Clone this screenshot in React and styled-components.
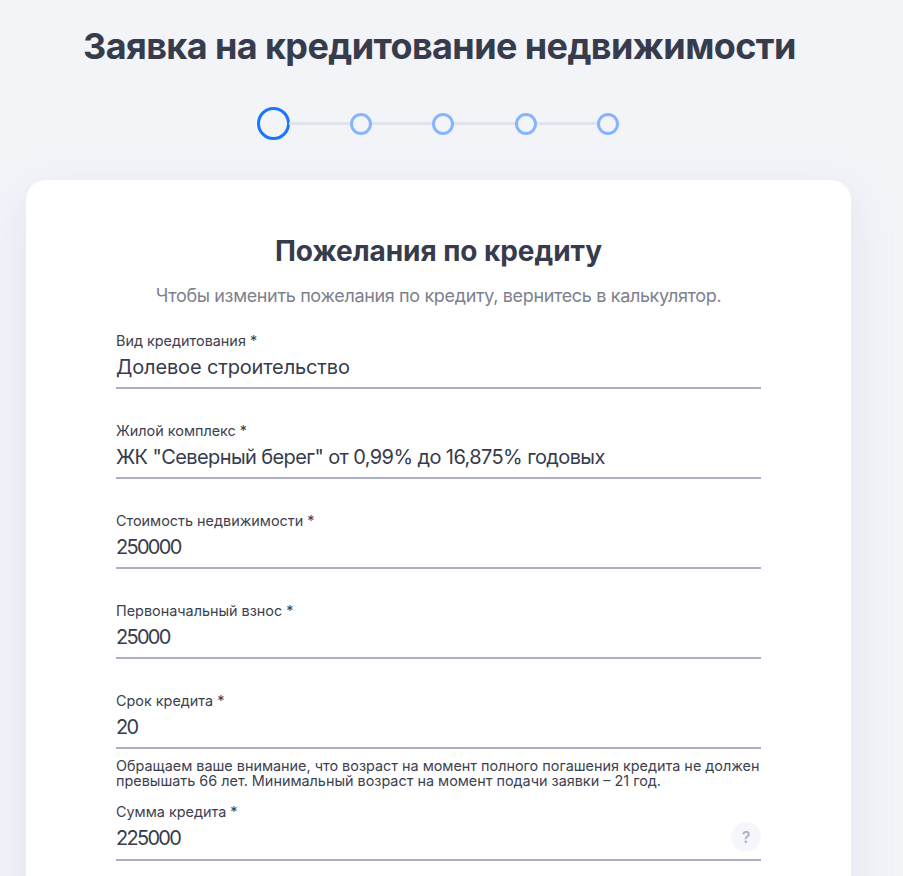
import React from "react";
import styled, { createGlobalStyle } from "styled-components";

const GlobalStyle = createGlobalStyle`
  html, body {
    margin: 0;
    height: 876px;
    overflow: hidden;
    background: #f2f4f8;
    font-family: Inter, "Noto Sans", sans-serif;
  }
`;

const Page = styled.div`
  width: 903px;
  height: 876px;
  overflow: hidden;
  padding-top: 23px;
  box-sizing: border-box;
`;

const Title = styled.h1`
  margin: 0 0 0 83px;
  font-size: 36px;
  line-height: 46px;
  font-weight: 700;
  letter-spacing: -0.6px;
  color: #373c4d;
  white-space: nowrap;
`;

const Stepper = styled.div`
  display: flex;
  align-items: center;
  margin: 38px 0 0 257px;
  height: 33px;
`;

const Dot = styled.span`
  flex: none;
  box-sizing: border-box;
  width: ${(p) => (p.$active ? 33 : 22)}px;
  height: ${(p) => (p.$active ? 33 : 22)}px;
  margin-right: ${(p) => (p.$active ? -1 : 0)}px;
  border-radius: 50%;
  border: 3px solid ${(p) => (p.$active ? "#1a76ff" : "#86b4ff")};
`;

const Line = styled.span`
  flex: none;
  width: 60.5px;
  height: 3px;
  background: #e0e4ec;
`;

const Card = styled.main`
  box-sizing: border-box;
  width: 825px;
  margin: 40px 0 0 26px;
  padding: 52px 90px 60px;
  background: #fff;
  border-radius: 20px;
  box-shadow: 0 15px 40px rgba(170, 180, 210, 0.25);
`;

const CardTitle = styled.h2`
  margin: 0;
  text-align: center;
  font-size: 28px;
  line-height: 38px;
  font-weight: 700;
  letter-spacing: -0.05px;
  color: #373c4d;
`;

const Subtitle = styled.p`
  margin: 14px 0 0;
  text-align: center;
  font-size: 18px;
  line-height: 24px;
  letter-spacing: -0.35px;
  white-space: nowrap;
  color: #7d818d;
`;

const Field = styled.div`
  position: relative;
  height: ${(p) => p.$height ?? 55}px;
  margin-top: ${(p) => p.$gap ?? 33}px;
  border-bottom: 2px solid #adafc4;
`;

const Label = styled.label`
  display: block;
  font-size: 14.4px;
  line-height: 17px;
  color: #3d4150;
`;

const Value = styled.div`
  margin-top: 5px;
  font-size: 20px;
  line-height: 26px;
  letter-spacing: ${(p) => p.$spacing ?? 0}px;
  color: #373c4d;
`;

const Note = styled.p`
  margin: 9px 0 0;
  font-size: 14.4px;
  line-height: 15px;
  white-space: nowrap;
  color: #3d4150;
`;

const Hint = styled.span`
  position: absolute;
  right: 0;
  top: 19px;
  width: 30px;
  height: 30px;
  border-radius: 50%;
  background: #f5f7fd;
  color: #b0b4c8;
  font-size: 16px;
  font-weight: 600;
  display: flex;
  align-items: center;
  justify-content: center;
`;

const fields = [
  { label: "Вид кредитования *", value: "Долевое строительство", spacing: -0.15 },
  { label: "Жилой комплекс *", value: 'ЖК "Северный берег" от 0,99% до 16,875% годовых', spacing: -0.6 },
  { label: "Стоимость недвижимости *", value: "250000", spacing: -1.7 },
  { label: "Первоначальный взнос *", value: "25000", spacing: -1.7 },
  { label: "Срок кредита *", value: "20", spacing: -1.7 },
];

export default function App() {
  return (
    <Page>
      <GlobalStyle />
      <Title>Заявка на кредитование недвижимости</Title>
      <Stepper>
        <Dot $active />
        <Line />
        <Dot />
        <Line />
        <Dot />
        <Line />
        <Dot />
        <Line />
        <Dot />
      </Stepper>
      <Card>
        <CardTitle>Пожелания по кредиту</CardTitle>
        <Subtitle>Чтобы изменить пожелания по кредиту, вернитесь в калькулятор.</Subtitle>
        {fields.map((f, i) => (
          <Field key={f.label} $gap={i === 0 ? 24 : 33}>
            <Label>{f.label}</Label>
            <Value $spacing={f.spacing}>{f.value}</Value>
          </Field>
        ))}
        <Note>
          Обращаем ваше внимание, что возраст на момент полного погашения кредита не должен
          <br />
          превышать 66 лет. Минимальный возраст на момент подачи заявки – 21 год.
        </Note>
        <Field $gap={15} $height={56}>
          <Label>Сумма кредита *</Label>
          <Value $spacing={-1.7}>225000</Value>
          <Hint>?</Hint>
        </Field>
      </Card>
    </Page>
  );
}
